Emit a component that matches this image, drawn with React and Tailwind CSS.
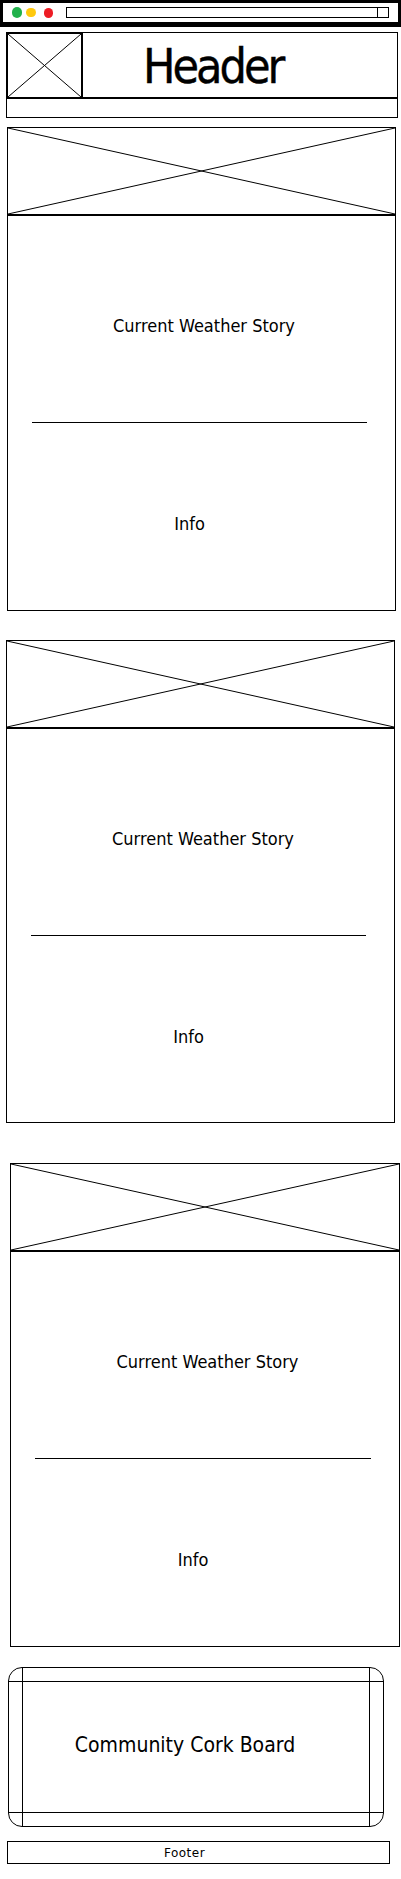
// Wireframe: weather community page (mobile)
const font = "font-['DejaVu_Sans_Condensed','DejaVu_Sans',sans-serif] font-stretch-condensed";

function Cross({ className }) {
  return (
    <svg className={className} viewBox="0 0 100 100" preserveAspectRatio="none">
      <line x1="0" y1="0" x2="100" y2="100" stroke="#000" strokeWidth="1" vectorEffect="non-scaling-stroke" />
      <line x1="0" y1="100" x2="100" y2="0" stroke="#000" strokeWidth="1" vectorEffect="non-scaling-stroke" />
    </svg>
  );
}

function StoryCard({ className }) {
  return (
    <div className={`flex flex-col border border-black ${className}`}>
      <Cross className="block w-full h-[86px] shrink-0" />
      <div className="h-[2px] bg-black shrink-0" />
      <div className="flex justify-center pl-[5px] mt-[100px] text-[18px] leading-[20px] text-black">
        Current Weather Story
      </div>
      <div className="h-px bg-black ml-[24px] mr-[28px] mt-[86px]" />
      <div className="flex justify-center pr-[24px] mt-[91px] text-[18px] leading-[20px] text-black">Info</div>
    </div>
  );
}

export default function App() {
  return (
    <div className={`w-[401px] h-[1879px] bg-white ${font}`}>
      {/* barra do navegador */}
      <div className="flex items-center h-[27px] border-t-[3px] border-x-[3px] border-b-[5px] border-black">
        <div className="w-[10px] h-[11px] rounded-full bg-[#22b14c] ml-[9px]" />
        <div className="w-[10px] h-[9px] rounded-full bg-[#ffc90e] ml-[4px]" />
        <div className="w-[9px] h-[10px] rounded-full bg-[#ed1c24] ml-[8px]" />
        <div className="flex justify-end ml-[13px] w-[323px] h-[11px] border border-black">
          <div className="w-[11px] h-full border-l border-black" />
        </div>
      </div>

      {/* header */}
      <div className="flex ml-[6px] w-[392px] mt-[5px] h-[67px]">
        <div className="w-[77px] h-full border-2 border-black shrink-0">
          <Cross className="block w-full h-full" />
        </div>
        <div className="flex-1 flex items-center pl-[60px] pt-[2px] border-t border-r border-b-2 border-black">
          <span className="text-[48px] leading-[48px] tracking-[-3px] text-black [-webkit-text-stroke:0.4px_black]">Header</span>
        </div>
      </div>
      <div className="ml-[6px] w-[392px] h-[19px] border-x border-b border-black" />

      <StoryCard className="ml-[7px] w-[389px] h-[484px] mt-[9px]" />
      <StoryCard className="ml-[6px] w-[389px] h-[483px] mt-[29px]" />
      <StoryCard className="ml-[10px] w-[390px] h-[484px] mt-[40px]" />

      {/* community cork board */}
      <div className="grid grid-cols-[13px_1fr_13px] grid-rows-[13px_1fr_13px] ml-[8px] w-[376px] h-[160px] mt-[20px] border border-black rounded-[14px]">
        <div className="col-start-1 col-end-4 row-start-2 row-end-3 border-y border-black" />
        <div className="col-start-2 col-end-3 row-start-1 row-end-4 border-x border-black" />
        <div className="col-start-2 col-end-3 row-start-2 row-end-3 flex items-center justify-center pr-[22px] pb-[4px] text-[21px] leading-[24px] text-black">
          Community Cork Board
        </div>
      </div>

      {/* footer */}
      <div className="flex items-center justify-center pr-[28px] ml-[7px] w-[383px] h-[23px] mt-[14px] border border-black font-['DejaVu_Sans',sans-serif] font-stretch-normal text-[12px] leading-[14px] tracking-[0.5px] text-black">
        Footer
      </div>
    </div>
  );
}
